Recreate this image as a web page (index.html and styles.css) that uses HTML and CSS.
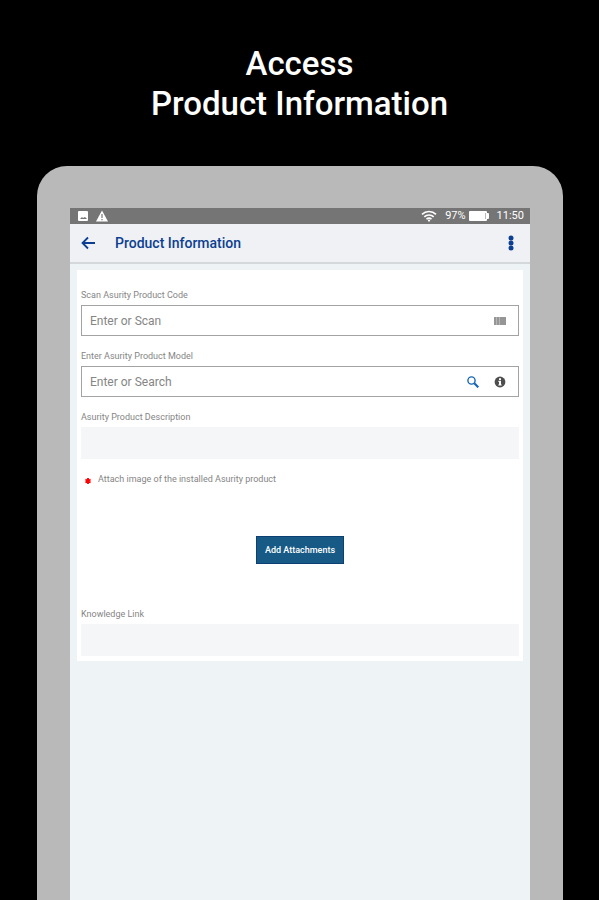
FILE: index.html
```html
<!DOCTYPE html>
<html lang="en">
<head>
    <meta charset="UTF-8">
    <meta name="viewport" content="width=device-width, initial-scale=1.0">
    <title>Product Information</title>
    <link rel="stylesheet" href="styles.css">
</head>
<body>
    <h1>Access<br>Product Information</h1>
    <div class="tablet">
        <div class="screen">
            <div class="status-bar">
                <svg width="12" height="12" viewBox="0 0 12 12">
                    <rect x="1" y="1" width="10" height="10" rx="1" fill="#fff"/>
                    <path d="M3 9l2-2 1 1 2-1 2 2z" fill="#757575"/>
                </svg>
                <svg width="12" height="12" viewBox="0 0 12 12">
                    <path d="M6 0.5L12 11.5H0z" fill="#fff"/>
                    <path d="M5.4 4h1.2v4H5.4zM5.4 9h1.2v1.3H5.4z" fill="#757575"/>
                </svg>
                <div class="status-right">
                    <svg width="16" height="12" viewBox="0 0 16 12" fill="none" stroke="#fff" stroke-width="1.6">
                        <path d="M1 4.4a10 10 0 0 1 14 0M3.3 6.9a6.6 6.6 0 0 1 9.4 0M5.5 9.2a3.5 3.5 0 0 1 5 0"/>
                        <circle cx="8" cy="10.6" r="1.1" fill="#fff" stroke="none"/>
                    </svg>
                    <span>97%</span>
                    <svg width="20" height="10" viewBox="0 0 20 10">
                        <path d="M1 0h16q1 0 1 1v1h1q1 0 1 1v4q0 1-1 1h-1v1q0 1-1 1H1q-1 0-1-1V1q0-1 1-1z" fill="#fff"/>
                        <path d="M16.5 2v6" stroke="#bbb"/>
                    </svg>
                    <span class="clock">11:50</span>
                </div>
            </div>
            <header class="app-bar">
                <button type="button" class="icon-btn" aria-label="Back">
                    <svg width="14" height="14" viewBox="0 0 14 14" fill="none" stroke="#0c3f91" stroke-width="1.8">
                        <path d="M14 7H1.5M7 1.5L1.5 7 7 12.5"/>
                    </svg>
                </button>
                <h2>Product Information</h2>
                <button type="button" class="icon-btn" aria-label="Menu">
                    <svg width="14" height="16" viewBox="0 0 14 16" fill="#0c3f91">
                        <circle cx="7" cy="3" r="2.5"/>
                        <circle cx="7" cy="8" r="2.5"/>
                        <circle cx="7" cy="13" r="2.5"/>
                    </svg>
                </button>
            </header>
            <form class="card">
                <div class="field">
                    <label for="code">Scan Asurity Product Code</label>
                    <div class="box">
                        <input type="text" id="code" placeholder="Enter or Scan">
                        <button type="button" class="icon-btn" aria-label="Scan">
                            <svg width="12" height="8" viewBox="0 0 12 8">
                                <path d="M0 0h12v8H0z" fill="#b5b5b5"/>
                                <path d="M1 0v8M4 0v8M7 0v8M9 0v8M11 0v8" stroke="#777"/>
                            </svg>
                        </button>
                    </div>
                </div>
                <div class="field">
                    <label for="model">Enter Asurity Product Model</label>
                    <div class="box">
                        <input type="text" id="model" placeholder="Enter or Search">
                        <button type="button" class="icon-btn" aria-label="Search">
                            <svg width="12" height="12" viewBox="0 0 12 12" fill="none" stroke="#1766b3">
                                <circle cx="4.5" cy="4.5" r="3.6" stroke-width="1.4"/>
                                <path d="M7.3 7.3L11.3 11.3" stroke-width="2.2"/>
                            </svg>
                        </button>
                        <button type="button" class="icon-btn" aria-label="Info">
                            <svg width="12" height="12" viewBox="0 0 12 12">
                                <circle cx="6" cy="6" r="5.4" fill="#4d4d4d"/>
                                <path d="M5 2.2h2v1.7H5zM4.4 4.8H7v3.6h.7v1.2H4.3V8.4H5V6h-.6z" fill="#fff"/>
                            </svg>
                        </button>
                    </div>
                </div>
                <div class="field">
                    <label for="description">Asurity Product Description</label>
                    <input type="text" id="description" class="readonly" readonly>
                </div>
                <p class="attach">
                    <svg width="6" height="8" viewBox="0 0 6 8" stroke="#f00" stroke-width="1.8">
                        <path d="M3 1v6M0.4 2.5l5.2 3M5.6 2.5l-5.2 3"/>
                    </svg>
                    Attach image of the installed Asurity product
                </p>
                <button type="button" class="add-btn">Add Attachments</button>
                <div class="field">
                    <label for="link">Knowledge Link</label>
                    <input type="text" id="link" class="readonly" readonly>
                </div>
            </form>
        </div>
    </div>
</body>
</html>
```
FILE: styles.css
```css
* {
    box-sizing: border-box;
}

body {
    margin: 0;
    min-height: 100vh;
    display: flex;
    flex-direction: column;
    background: #000;
    font-family: Roboto, "Liberation Sans", sans-serif;
}

h1 {
    margin: 0;
    padding: 44px 16px 42px;
    color: #fff;
    font-size: 33px;
    font-weight: 500;
    line-height: 40px;
    text-align: center;
}

/* Tablet frame */
.tablet {
    flex: 1;
    display: flex;
    margin: 0 36px 0 37px;
    padding: 42px 33px 0;
    background: #b9b9b9;
    border-radius: 30px 30px 0 0;
}

.screen {
    flex: 1;
    min-width: 0;
    background: #eef4f5;
}

.status-bar {
    display: flex;
    align-items: center;
    gap: 7px;
    height: 16px;
    padding: 0 6px 0 7px;
    background: #757575;
    color: #fff;
    font-size: 11px;
    line-height: 14px;
}

.status-right {
    display: flex;
    align-items: center;
    gap: 3px;
    margin-left: auto;
}

.status-right span {
    margin-left: 5px;
}

/* Header */
.app-bar {
    display: flex;
    align-items: center;
    height: 40px;
    padding: 0 12px 0 11px;
    background: #eff1f4;
    border-bottom: 2px solid #d5d8da;
}

.app-bar h2 {
    flex: 1;
    margin: 0 0 0 20px;
    color: #0c3f91;
    font-size: 14px;
    font-weight: 500;
}

.icon-btn {
    display: flex;
    padding: 0;
    border: none;
    background: none;
    cursor: pointer;
}

/* Form */
.card {
    margin: 6px 7px 0;
    padding: 15px 4px 5px;
    background: #fff;
}

.field {
    margin-bottom: 10px;
}

.field:last-child {
    margin-bottom: 0;
}

label {
    display: block;
    color: #858585;
    font-size: 9px;
    line-height: 20px;
}

.box {
    display: flex;
    align-items: center;
    gap: 15px;
    height: 31px;
    padding: 0 12px 0 8px;
    border: 1px solid #a3a3a3;
}

.box input {
    flex: 1;
    min-width: 0;
    padding: 0;
    border: none;
    outline: none;
    background: none;
    font-family: inherit;
    font-size: 12px;
}

.box input::placeholder {
    color: #858585;
}

.readonly {
    display: block;
    width: 100%;
    height: 32px;
    border: none;
    background: #f5f6f8;
}

.attach {
    display: flex;
    align-items: center;
    gap: 7px;
    margin: 0;
    padding-left: 4px;
    color: #858585;
    font-size: 9px;
    line-height: 20px;
}

.attach svg {
    margin-top: 4px;
}

.add-btn {
    display: block;
    height: 28px;
    margin: 47px auto 40px;
    padding: 0 8px;
    border: 1px solid #0c3f73;
    background: #165a85;
    color: #fff;
    font-family: inherit;
    font-size: 9px;
    font-weight: 500;
    cursor: pointer;
}
```
